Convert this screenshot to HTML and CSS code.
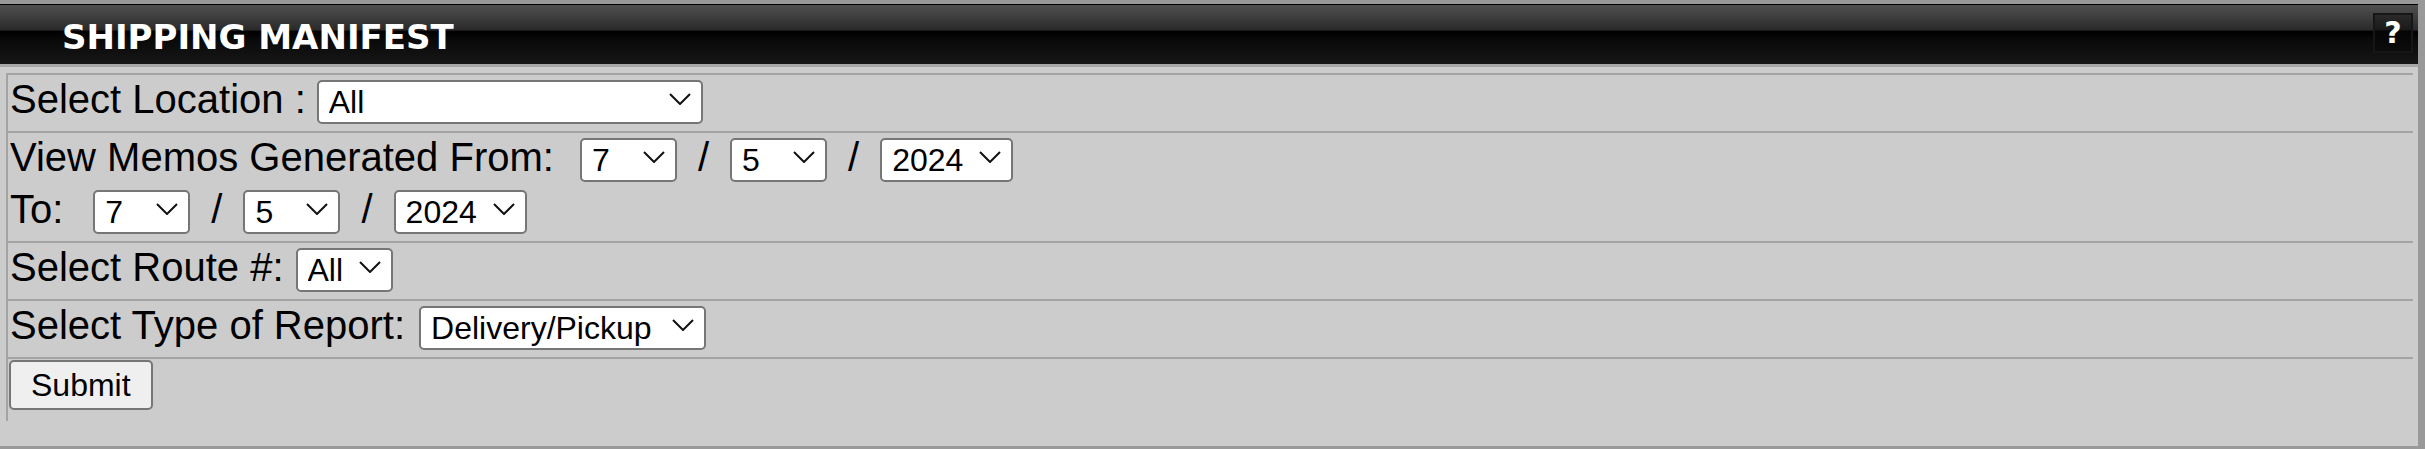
FILE: index.html
```html
<!DOCTYPE html>
<html lang="en">
<head>
  <meta charset="UTF-8">
  <meta name="viewport" content="width=device-width, initial-scale=1.0">
  <title>Shipping Manifest</title>
  <link rel="stylesheet" href="styles.css">
</head>
<body>
  <div class="manifest">
    <div class="titlebar">
      <span class="title">SHIPPING MANIFEST</span>
      <span class="help">?</span>
    </div>
    <div class="panel">
      <form class="report-form">
        <div class="row">
          <div class="line">
            <label for="location">Select Location :</label>
            <span class="pick gap-s">
              <select id="location" class="sel-location"><option>All</option></select>
              <svg class="chev" viewBox="0 0 22 12"><polyline points="1,1 11,11 21,1"/></svg>
            </span>
          </div>
        </div>

        <div class="row">
          <div class="line">
            <label for="from_month">View Memos Generated From:</label>
            <span class="pick gap-xl">
              <select id="from_month" class="sel-day"><option>7</option></select>
              <svg class="chev" viewBox="0 0 22 12"><polyline points="1,1 11,11 21,1"/></svg>
            </span>
            <span class="slash">/</span>
            <span class="pick">
              <select id="from_day" class="sel-day"><option>5</option></select>
              <svg class="chev" viewBox="0 0 22 12"><polyline points="1,1 11,11 21,1"/></svg>
            </span>
            <span class="slash">/</span>
            <span class="pick">
              <select id="from_year" class="sel-year"><option>2024</option></select>
              <svg class="chev" viewBox="0 0 22 12"><polyline points="1,1 11,11 21,1"/></svg>
            </span>
          </div>
          <div class="line">
            <label for="to_month">To:</label>
            <span class="pick gap-to">
              <select id="to_month" class="sel-day"><option>7</option></select>
              <svg class="chev" viewBox="0 0 22 12"><polyline points="1,1 11,11 21,1"/></svg>
            </span>
            <span class="slash">/</span>
            <span class="pick">
              <select id="to_day" class="sel-day"><option>5</option></select>
              <svg class="chev" viewBox="0 0 22 12"><polyline points="1,1 11,11 21,1"/></svg>
            </span>
            <span class="slash">/</span>
            <span class="pick">
              <select id="to_year" class="sel-year"><option>2024</option></select>
              <svg class="chev" viewBox="0 0 22 12"><polyline points="1,1 11,11 21,1"/></svg>
            </span>
          </div>
        </div>

        <div class="row">
          <div class="line">
            <label for="route">Select Route #:</label>
            <span class="pick gap-m">
              <select id="route" class="sel-day"><option>All</option></select>
              <svg class="chev" viewBox="0 0 22 12"><polyline points="1,1 11,11 21,1"/></svg>
            </span>
          </div>
        </div>

        <div class="row">
          <div class="line">
            <label for="report_type">Select Type of Report:</label>
            <span class="pick gap-l">
              <select id="report_type" class="sel-type"><option>Delivery/Pickup</option></select>
              <svg class="chev" viewBox="0 0 22 12"><polyline points="1,1 11,11 21,1"/></svg>
            </span>
          </div>
        </div>

        <div class="row row-last">
          <div class="line">
            <button type="button" class="submit">Submit</button>
          </div>
        </div>
      </form>
    </div>
  </div>
</body>
</html>
```

FILE: styles.css
```css
body {
  margin: 0;
  background-color: #999999;
  font-family: "Liberation Sans", Arial, sans-serif;
}

.manifest {
  margin: 4px 7px 0 0;
  height: 442px;
  display: flex;
  flex-direction: column;
}

.titlebar {
  height: 59px;
  border-top: 1px solid #000;
  background: linear-gradient(#505050 0%, #2a2a2a 42%, #000 45%, #0a0a0a 60%, #161616 100%);
  display: flex;
  align-items: flex-start;
  justify-content: space-between;
}

.title {
  margin: 12px 0 0 62px;
  font-family: "DejaVu Sans", Verdana, sans-serif;
  font-weight: bold;
  font-size: 34px;
  line-height: 40px;
  color: #fff;
}

.help {
  margin: 8px 5px 0 0;
  width: 36px;
  height: 36px;
  border: 2px solid #161616;
  background: linear-gradient(#2a2a2a 0%, #1a1a1a 40%, #050505 45%, #0c0c0c 100%);
  color: #fff;
  font-family: "DejaVu Sans", Verdana, sans-serif;
  font-weight: bold;
  font-size: 30px;
  line-height: 36px;
  text-align: center;
}

.panel {
  flex: 1;
  background-color: #cbcccb;
  border-top: 3px solid #a6a6a6;
  padding: 6px 5px 0 6px;
}

.row {
  border-top: 2px solid #a3a3a3;
  border-left: 2px solid #a3a3a3;
  padding: 2px 0 2px 2px;
}

.line {
  height: 52px;
  display: flex;
  align-items: baseline;
  font-size: 40px;
  color: #000;
}

.line label {
  white-space: nowrap;
}

.pick {
  position: relative;
  display: inline-block;
}

.pick select {
  -webkit-appearance: none;
  appearance: none;
  height: 44px;
  margin: 0;
  padding: 0 0 0 10px;
  border: 2px solid #767676;
  border-radius: 5px;
  background-color: #fff;
  color: #000;
  font-family: "Liberation Sans", Arial, sans-serif;
  font-size: 32px;
}

.chev {
  position: absolute;
  right: 12px;
  top: 16px;
  width: 22px;
  height: 12px;
  fill: none;
  stroke: #111;
  stroke-width: 2;
  pointer-events: none;
}

.sel-location {
  width: 386px;
}

.sel-day {
  width: 97px;
}

.sel-year {
  width: 133px;
}

.sel-type {
  width: 287px;
}

.gap-s {
  margin-left: 11px;
}

.gap-m {
  margin-left: 12px;
}

.gap-l {
  margin-left: 14px;
}

.gap-xl {
  margin-left: 26px;
}

.gap-to {
  margin-left: 30px;
}

.slash {
  margin: 0 21px;
}

.submit {
  height: 50px;
  margin: -1px 0 0 -1px;
  padding: 0 20px;
  border: 2px solid #767676;
  border-radius: 5px;
  background-color: #efefef;
  color: #000;
  font-family: "Liberation Sans", Arial, sans-serif;
  font-size: 32px;
}

.row-last .line {
  height: 58px;
}
```
